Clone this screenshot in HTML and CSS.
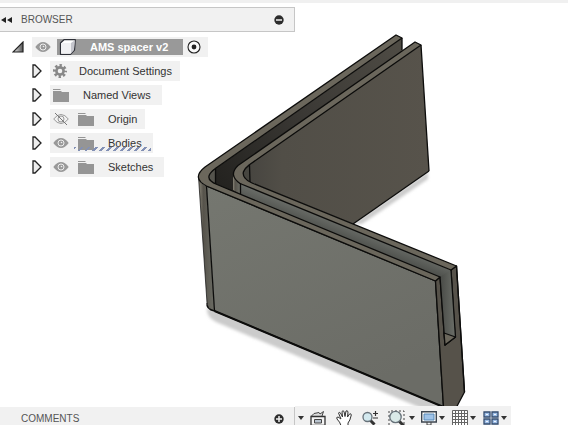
FILE: index.html
```html
<!DOCTYPE html>
<html lang="en">
<head>
<meta charset="utf-8">
<title>AMS spacer v2</title>
<link rel="stylesheet" href="styles.css">
</head>
<body>
<svg class="defs" width="0" height="0" aria-hidden="true">
  <symbol id="arrow" viewBox="0 0 10 14"><path d="M1 1H3L9 7L3 13H1Z" fill="#ededed" stroke="#222" stroke-width="1.300"/></symbol>
  <symbol id="eye" viewBox="0 0 16 12"><path d="M.3 6Q4 1 8 1T15.700 6Q12 11 8 11T.3 6Z" fill="#999"/><circle cx="8" cy="6" r="3" fill="none" stroke="#eee" stroke-width="1"/><circle cx="8.500" cy="5.500" r=".8" fill="#eee"/></symbol>
  <symbol id="eye-off" viewBox="0 0 16 12"><path d="M.7 6Q4 1.500 8 1.500T15.300 6Q12 10.500 8 10.500T.7 6Z" fill="none" stroke="#999"/><circle cx="8" cy="6" r="3" fill="none" stroke="#999"/><path d="M2 0L14 12" stroke="#777"/></symbol>
  <symbol id="folder" viewBox="0 0 16 14"><path d="M0 1H7L8 2H0ZM0 3H8L9 4H16V14H0Z" fill="#959595"/></symbol>
  <symbol id="caret" viewBox="0 0 6 4"><path d="M0 0H6L3 4Z" fill="#333"/></symbol>
</svg>
<main class="app">
  <svg class="model" viewBox="0 0 568 425" preserveAspectRatio="xMinYMin meet" role="img" aria-label="Spacer model">
    <defs>
      <linearGradient id="front" x1="0" y1="0" x2=".5" y2="1"><stop offset="0" stop-color="#757770"/><stop offset="1" stop-color="#6b6c66"/></linearGradient>
      <linearGradient id="back" x1="0" y1="0" x2="1" y2="0"><stop offset="0" stop-color="#474540"/><stop offset=".18" stop-color="#514e47"/><stop offset="1" stop-color="#57534b"/></linearGradient>
      <linearGradient id="slot" gradientUnits="userSpaceOnUse" x1="220" y1="190" x2="402" y2="50"><stop offset="0" stop-color="#23221f"/><stop offset=".5" stop-color="#3b3935"/><stop offset="1" stop-color="#4e4b44"/></linearGradient>
      <linearGradient id="groove" gradientUnits="userSpaceOnUse" x1="340" y1="222" x2="333" y2="240"><stop offset="0" stop-color="#6b6e69"/><stop offset="1" stop-color="#454743"/></linearGradient>
      <linearGradient id="channel" x1="0" y1="0" x2="1" y2="0"><stop offset="0" stop-color="#484a46"/><stop offset="1" stop-color="#6c6f69"/></linearGradient>
      <linearGradient id="bend" x1="0" y1="0" x2="1" y2="0"><stop offset="0" stop-color="#898578"/><stop offset=".3" stop-color="#56534b"/><stop offset="1" stop-color="#6c6d65"/></linearGradient>
      <filter id="soft" x="-10%" y="-10%" width="120%" height="120%"><feGaussianBlur stdDeviation="1.500"/></filter>
    </defs>
    <g fill="#cbcbcb" filter="url(#soft)">
      <path d="M207 308L214 310L452 408H421L216 322Q206 317 207 308Z"/>
      <path d="M352 224L428 172V179L362 224Z"/>
    </g>
    <path fill="#55544d" d="M218 166Q203 175 211 183L240 196V160Z"/>
    <g stroke="#0c0c0b" stroke-width="1.300" stroke-linejoin="round">
      <path fill="url(#slot)" stroke="none" d="M216 168L402 38V60L260 165L240 196L216 186Z"/>
      <path fill="#474640" stroke="none" d="M253 164Q238 172 246 181L253 184Z"/>
      <path fill="url(#back)" stroke="none" d="M249 165L421 45L429 171L353 224L250 182Z"/>
      <path fill="none" d="M429 171L353 224"/>
      <path fill="url(#groove)" stroke="none" d="M240 182L451 270L453 340L436 300V279L240 198Z"/>
      <path fill="url(#bend)" stroke="none" d="M233 176V190L240 194V183Z"/>
      <path fill="url(#bend)" stroke="none" d="M198.500 177Q200 184 206.500 186L214.500 311Q207 309 207 303Z"/>
      <path fill="none" stroke-width=".7" d="M198.500 177L207 303"/>
      <path fill="none" d="M207 303Q206 309 214.500 311"/>
      <path fill="url(#front)" d="M206.500 186L435.500 281L443.500 407L214.500 311Z"/>
      <path fill="#56524a" d="M435.500 281L440 277L445 345L455 337L451 270L456.500 266L464.500 392L455 410L443.500 407Z"/>
      <path fill="url(#channel)" stroke="none" d="M440 277L451 270L455.500 337L445 345Z"/>
      <path fill="none" d="M440 277L445 345L455.500 337L451 270"/>
      <path fill="#6b675c" d="M445 345L444 333L455.500 337Z"/>
      <path fill="#6b675c" d="M396 35L402 38L216 168Q205 176 211 181Q213 183 217 184.500L440 277L435.500 281L206.500 186Q191 178 205 167Z"/>
      <path fill="#6b675c" d="M415 42L421 45L249 165Q240 172 245 178Q247 181 252 183L456.500 266L451 270L240 183.500Q228 175 238 165.500Z"/>
      <path fill="none" d="M402 38V50M421 45L429 171M215.500 169V184M249.500 165L250 182M240.500 183V194M456.500 266L464.500 392"/>
      <path fill="none" stroke-width="2" d="M214.500 311L443.500 407"/>
    </g>
  </svg>

  <div class="strip"></div>
  <header class="panel">
    <button class="plain" aria-label="Collapse browser"><svg width="11" height="6" viewBox="0 0 11 6"><path d="M5 0V6L0 3ZM11 0V6L6 3Z" fill="#222"/></svg></button>
    <h2>BROWSER</h2>
    <button class="plain round" aria-label="Minimize"><svg width="10" height="10" viewBox="0 0 10 10"><circle cx="5" cy="5" r="4.700" fill="#2c2c2c"/><path d="M2 5H8" stroke="#eee" stroke-width="1.500"/></svg></button>
  </header>

  <nav class="tree" aria-label="Browser tree">
    <div class="row root">
      <button class="plain twist" aria-label="Collapse"><svg width="12" height="12" viewBox="0 0 12 12"><defs><linearGradient id="fold"><stop stop-color="#eee"/><stop offset="1" stop-color="#555"/></linearGradient></defs><path d="M11 1V11H1Z" fill="url(#fold)" stroke="#222" stroke-width="1.200"/></svg></button>
      <div class="item">
        <button class="plain" aria-label="Hide"><svg width="16" height="12"><use href="#eye"/></svg></button>
        <div class="selected">
          <svg width="20" height="16" viewBox="0 0 20 16"><path d="M3.500 4L7 .7H18.300L17.500 11L13.500 15.300H3.500Z" fill="#fff" stroke="#2e3038" stroke-width="1.200" stroke-linejoin="round"/><path d="M14 4L17.800 1.200L17 11L14 14.500Z" fill="#c5c6cd"/><path d="M4.200 4H14V14.600H4.200Z" fill="#f1f1f3"/></svg>
          <span>AMS spacer v2</span>
        </div>
        <button class="plain activate" aria-label="Activate"><svg width="14" height="14" viewBox="0 0 14 14"><circle cx="7" cy="7" r="6" fill="#fafafa" stroke="#222" stroke-width="1.100"/><circle cx="7" cy="7" r="2.400" fill="#222"/></svg></button>
      </div>
    </div>
    <div class="row">
      <button class="plain twist" aria-label="Expand"><svg width="10" height="14"><use href="#arrow"/></svg></button>
      <div class="item settings"><svg width="14" height="14" viewBox="0 0 14 14"><circle cx="7" cy="7" r="5.500" fill="none" stroke="#888" stroke-width="3" stroke-dasharray="2.300 2.020" stroke-dashoffset="1.150"/><circle cx="7" cy="7" r="3.600" fill="none" stroke="#888" stroke-width="2.600"/></svg><span>Document Settings</span></div>
    </div>
    <div class="row">
      <button class="plain twist" aria-label="Expand"><svg width="10" height="14"><use href="#arrow"/></svg></button>
      <div class="item views"><svg width="16" height="14"><use href="#folder"/></svg><span>Named Views</span></div>
    </div>
    <div class="row">
      <button class="plain twist" aria-label="Expand"><svg width="10" height="14"><use href="#arrow"/></svg></button>
      <div class="item origin"><button class="plain" aria-label="Show"><svg width="16" height="12"><use href="#eye-off"/></svg></button><svg width="16" height="14"><use href="#folder"/></svg><span>Origin</span></div>
    </div>
    <div class="row">
      <button class="plain twist" aria-label="Expand"><svg width="10" height="14"><use href="#arrow"/></svg></button>
      <div class="item bodies"><button class="plain" aria-label="Hide"><svg width="16" height="12"><use href="#eye"/></svg></button><svg width="16" height="14"><use href="#folder"/></svg><span>Bodies</span><i class="hatch"></i></div>
    </div>
    <div class="row">
      <button class="plain twist" aria-label="Expand"><svg width="10" height="14"><use href="#arrow"/></svg></button>
      <div class="item"><button class="plain" aria-label="Hide"><svg width="16" height="12"><use href="#eye"/></svg></button><svg width="16" height="14"><use href="#folder"/></svg><span>Sketches</span></div>
    </div>
  </nav>

  <footer class="bottom">
    <section class="comments">
      <h2>COMMENTS</h2>
      <button class="plain round" aria-label="Add comment"><svg width="10" height="10" viewBox="0 0 10 10"><circle cx="5" cy="5" r="4.700" fill="#2c2c2c"/><path d="M2 5H8M5 2V8" stroke="#eee" stroke-width="1.500"/></svg></button>
    </section>
    <div class="tools">
      <button class="plain" aria-label="Orbit options"><svg width="6" height="4"><use href="#caret"/></svg></button>
      <button class="plain after" aria-label="Look at"><svg width="16" height="16" viewBox="0 0 16 16"><path d="M1.500 6L4 3.500L9 2.500L10 4L13.500 1.500L12 6" fill="#ddd" stroke="#444"/><path d="M1 6.500H15V15.500H1Z" fill="#f4f4f4" stroke="#333" stroke-width="1.300"/><path d="M4.500 9.500H11.500V13H4.500Z" fill="#b9c4cf" stroke="#444"/></svg></button>
      <button class="plain" aria-label="Pan"><svg width="16" height="16" viewBox="0 0 16 16"><path d="M5 15.500Q4 12 1 9Q0 7 2 7L5 9L2.500 3Q3 1.500 4.500 3L6.500 7L6 1.500Q7 0 8 1.500L9 6.500L10 1Q11.500 0 12 2L11.500 7L13.500 4Q15 3 15.300 5Q14 11 12 13V15.500" fill="#fff" stroke="#333"/></svg></button>
      <button class="plain" aria-label="Zoom"><svg width="16" height="16" viewBox="0 0 16 16"><path d="M8 10L12.500 14.500" stroke="#333" stroke-width="3"/><circle cx="5.500" cy="7" r="4.500" fill="#d3e9ef" stroke="#667179" stroke-width="1.300"/><path d="M11 3.500H16M13.500 1V6M11 8H16" stroke="#333" stroke-width="1.200"/></svg></button>
      <button class="plain" aria-label="Fit"><svg width="17" height="16" viewBox="0 0 17 16"><path d="M1 15V1H16V15" fill="none" stroke="#444" stroke-dasharray="2 2"/><path d="M11 11L16 16" stroke="#333" stroke-width="3"/><circle cx="7.500" cy="7" r="5.700" fill="#d9e9e8" stroke="#667179" stroke-width="1.300"/></svg></button>
      <button class="plain drop" aria-label="Fit options"><svg width="6" height="4"><use href="#caret"/></svg></button>
      <button class="plain after" aria-label="Display settings"><svg width="16" height="16" viewBox="0 0 16 16"><path d="M.7 1.700H15.300V12H.7Z" fill="#fff" stroke="#3d4650" stroke-width="1.400"/><path d="M3 4H13V10H3Z" fill="#9fc3e8" stroke="#5688b5"/><path d="M6 12V15H10V12M4 15.500H12" fill="none" stroke="#444"/></svg></button>
      <button class="plain near" aria-label="Display options"><svg width="6" height="4"><use href="#caret"/></svg></button>
      <button class="plain" aria-label="Grid"><svg width="16" height="16" viewBox="0 0 16 16"><path d="M.5 .5H15.500V15.500H.5ZM3.500 0V16M6.500 0V16M9.500 0V16M12.500 0V16M0 3.500H16M0 6.500H16M0 9.500H16M0 12.500H16" fill="#fff" stroke="#666"/></svg></button>
      <button class="plain near" aria-label="Grid options"><svg width="6" height="4"><use href="#caret"/></svg></button>
      <button class="plain" aria-label="Viewports"><svg width="16" height="14" viewBox="0 0 16 14"><path d="M1 1H7V6H1ZM9 1H15V6H9ZM1 8H7V13H1ZM9 8H15V13H9Z" fill="#9dbde5" stroke="#354d70" stroke-width="1.300"/><path d="M3 3.500H5M11 3.500H13M3 10.500H5M11 10.500H13" stroke="#f1f6ff"/></svg></button>
      <button class="plain near" aria-label="Viewport options"><svg width="6" height="4"><use href="#caret"/></svg></button>
    </div>
  </footer>
</main>
</body>
</html>
```
FILE: styles.css
```css
* { box-sizing: border-box; }

body {
  margin: 0;
  background: #fff;
  color: #333;
  font: 11px/20px "Liberation Sans", Arial, sans-serif;
}

svg { display: block; flex: none; }

.defs { position: absolute; }

.app {
  position: relative;
  display: flex;
  flex-direction: column;
  min-height: 100vh;
  overflow: hidden;
}

.model {
  position: absolute;
  inset: 0;
  width: 100%;
}

.strip, .panel, .tree, .bottom { position: relative; }

.strip { height: 3px; background: #f0f0f0; }

.plain {
  display: flex;
  align-items: center;
  padding: 0;
  border: 0;
  background: none;
}

.panel {
  display: flex;
  align-items: center;
  gap: 9px;
  width: 52%;
  height: 25px;
  margin-top: 4px;
  padding: 0 10px 0 1px;
  border: 1px solid #c6c6c6;
  border-left: 0;
  background: #f1f1f1;
}

h2 {
  margin: 0;
  color: #555;
  font-size: 10px;
  font-weight: 400;
}

.round { margin-left: auto; }

.tree {
  display: grid;
  gap: 4px;
  justify-items: start;
  margin-top: 5px;
  padding-left: 32px;
}

.row { display: flex; }

.twist { width: 18px; }

.root { margin-left: -20px; }

.root .twist { width: 20px; }

.item {
  display: flex;
  align-items: center;
  gap: 9px;
  height: 20px;
  padding: 0 11px 0 3px;
  background: #f1f1f1;
}

.item span { margin-left: 5px; white-space: nowrap; }

.settings { padding-right: 8px; }

.settings span { margin-left: 3px; }

.origin { padding-right: 8px; }

.root .item { gap: 6px; padding: 0 7px 0 3px; }

.selected {
  display: flex;
  align-items: center;
  height: 16px;
  padding-right: 15px;
  background: #999;
  color: #fff;
  font-weight: 700;
}

.root .selected span { margin-left: 13px; }

.activate { margin-left: -2px; }

.bodies { position: relative; }

.hatch {
  position: absolute;
  right: 2px;
  bottom: 2px;
  left: 24px;
  height: 4px;
  background: repeating-linear-gradient(135deg, #8290b5 0 2px, transparent 2px 5px);
}

.bottom {
  display: flex;
  align-items: flex-end;
  height: 19px;
  margin-top: auto;
}

.comments {
  display: flex;
  align-items: center;
  width: 52%;
  height: 18px;
  padding: 6px 10px 0 21px;
  border-right: 1px solid #c6c6c6;
  background: #f1f1f1;
}

.tools {
  display: flex;
  align-items: center;
  gap: 10px;
  height: 19px;
  padding: 4px 4px 0 3px;
  background: #f1f1f1;
}

.tools .after { margin-left: -4px; }

.tools .drop { margin-left: -6px; }

.tools .near { margin-left: -8px; }

.tools .near + .plain { margin-left: -3px; }
```
